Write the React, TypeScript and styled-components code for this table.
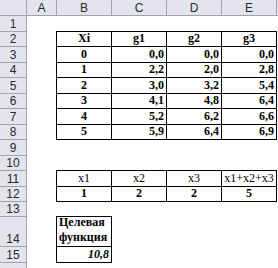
import React from 'react';
import styled, { createGlobalStyle } from 'styled-components';

type Align = 'left' | 'center' | 'right';

interface CellSpec {
  text?: string;
  align?: Align;
  bold?: boolean;
  italic?: boolean;
  boxed?: boolean;
  top?: boolean;
  left?: boolean;
  wrap?: boolean;
}

const GlobalStyle = createGlobalStyle`
  html, body {
    margin: 0;
    padding: 0;
    background: #ffffff;
    overflow: hidden;
  }
`;

const COLS = ['A', 'B', 'C', 'D', 'E', ''];
// heights include the 1px gridline at the bottom
const ROW_HEIGHTS = [16, 15, 16, 15, 16, 15, 16, 15, 16, 15, 16, 15, 15, 30, 16, 16];
const LAST_VISIBLE_LABEL = 15;

const Sheet = styled.div`
  display: grid;
  grid-template-columns: 27px 30px 55px 55px 55px 55px 20px;
  grid-template-rows: 16px ${ROW_HEIGHTS.map((h) => `${h}px`).join(' ')};
  width: 278px;
  height: 268px;
  overflow: hidden;
  background: #ffffff;
`;

const HeaderCell = styled.div<{ $bottom?: boolean }>`
  box-sizing: border-box;
  background: #e4e4ec;
  border-right: 1px solid #a2a2ae;
  border-bottom: 1px solid #a2a2ae;
  color: #2a2a2a;
  font-family: 'Liberation Sans', Arial, sans-serif;
  font-size: 12px;
  display: flex;
  justify-content: center;
  align-items: ${(p) => (p.$bottom ? 'flex-end' : 'center')};
  line-height: 14px;
  overflow: hidden;
`;

const Corner = styled(HeaderCell)`
  background: #e4e4ec;
`;

const Cell = styled.div<{
  $align: Align;
  $bold?: boolean;
  $italic?: boolean;
  $boxed?: boolean;
  $top?: boolean;
  $left?: boolean;
  $wrap?: boolean;
}>`
  box-sizing: border-box;
  display: flex;
  align-items: flex-end;
  justify-content: ${(p) =>
    p.$align === 'left' ? 'flex-start' : p.$align === 'right' ? 'flex-end' : 'center'};
  padding: 0 2px 1px 2px;
  font-family: 'Liberation Serif', 'Times New Roman', serif;
  font-size: 12px;
  line-height: 14px;
  font-weight: ${(p) => (p.$bold ? 700 : 400)};
  font-style: ${(p) => (p.$italic ? 'italic' : 'normal')};
  color: #000000;
  white-space: ${(p) => (p.$wrap ? 'normal' : 'nowrap')};
  border-right: ${(p) => (p.$boxed ? '1px solid #000' : 'none')};
  border-bottom: ${(p) => (p.$boxed ? '1px solid #000' : 'none')};
  box-shadow: ${(p) => {
    const s: string[] = [];
    if (p.$boxed && p.$left) s.push('-1px 0 0 #000');
    if (p.$boxed && p.$top) s.push('0 -1px 0 #000');
    if (p.$boxed && p.$left && p.$top) s.push('-1px -1px 0 #000');
    return s.length ? s.join(', ') : 'none';
  }};
`;

const WrapText = styled.span`
  display: block;
  text-align: left;
  line-height: 15px;
`;

const table1: [string, string, string, string][] = [
  ['0', '0,0', '0,0', '0,0'],
  ['1', '2,2', '2,0', '2,8'],
  ['2', '3,0', '3,2', '5,4'],
  ['3', '4,1', '4,8', '6,4'],
  ['4', '5,2', '6,2', '6,6'],
  ['5', '5,9', '6,4', '6,9'],
];

// rows indexed 1..16, columns A..F
function buildRows(): Record<number, CellSpec[]> {
  const rows: Record<number, CellSpec[]> = {};
  for (let r = 1; r <= 16; r++) rows[r] = COLS.map(() => ({}));

  ['Xi', 'g1', 'g2', 'g3'].forEach((t, i) => {
    rows[2][i + 1] = { text: t, align: 'center', bold: true, boxed: true, top: true, left: i === 0 };
  });
  table1.forEach((vals, ri) => {
    vals.forEach((t, i) => {
      rows[ri + 3][i + 1] = {
        text: t,
        align: i === 0 ? 'center' : 'right',
        bold: true,
        boxed: true,
        left: i === 0,
      };
    });
  });

  ['x1', 'x2', 'x3', 'x1+x2+x3'].forEach((t, i) => {
    rows[11][i + 1] = { text: t, align: 'center', boxed: true, top: true, left: i === 0 };
  });
  ['1', '2', '2', '5'].forEach((t, i) => {
    rows[12][i + 1] = { text: t, align: 'center', bold: true, boxed: true, left: i === 0 };
  });

  rows[14][1] = { text: 'Целевая функция', align: 'left', bold: true, boxed: true, top: true, left: true, wrap: true };
  rows[15][1] = { text: '10,8', align: 'right', bold: true, italic: true, boxed: true, left: true };
  return rows;
}

const App: React.FC = () => {
  const rows = buildRows();
  return (
    <>
      <GlobalStyle />
      <Sheet>
        <Corner />
        {COLS.map((c, i) => (
          <HeaderCell key={`h${i}`}>{c}</HeaderCell>
        ))}
        {ROW_HEIGHTS.map((_, idx) => {
          const r = idx + 1;
          return (
            <React.Fragment key={r}>
              <HeaderCell $bottom={r === 14}>{r <= LAST_VISIBLE_LABEL ? r : ''}</HeaderCell>
              {rows[r].map((cell, ci) => (
                <Cell
                  key={ci}
                  $align={cell.align || 'left'}
                  $bold={cell.bold}
                  $italic={cell.italic}
                  $boxed={cell.boxed}
                  $top={cell.top}
                  $left={cell.left}
                  $wrap={cell.wrap}
                >
                  {cell.wrap ? <WrapText>{cell.text}</WrapText> : cell.text}
                </Cell>
              ))}
            </React.Fragment>
          );
        })}
      </Sheet>
    </>
  );
};

export default App;
